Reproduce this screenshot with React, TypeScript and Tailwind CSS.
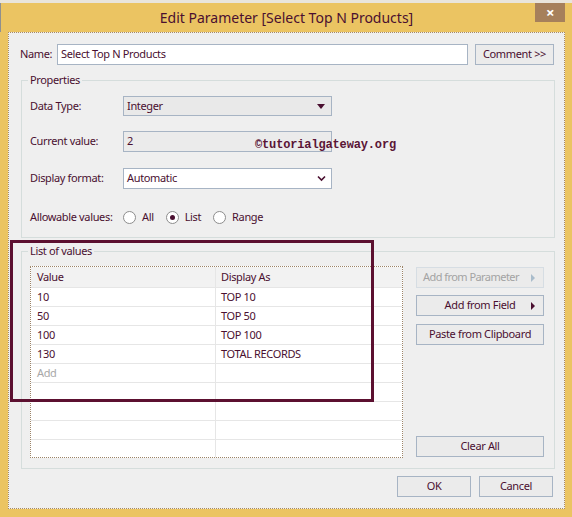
import { ReactNode } from "react";

const ink = "text-[#4a0f30]";

interface BtnProps {
  children: ReactNode;
  className?: string;
  disabled?: boolean;
  arrow?: boolean;
}

function Btn({ children, className = "", disabled = false, arrow = false }: BtnProps) {
  return (
    <div
      className={`relative flex h-[21px] items-center border bg-[#ebebeb] ${
        disabled ? "justify-start border-[#d6dde3] pl-[6px] tracking-[-0.55px] text-[#a3a3a3]" : `justify-center border-[#a7b4c4] ${ink}`
      } ${className}`}
    >
      <span>{children}</span>
      {arrow && (
        <span
          className={`absolute right-[8px] top-[6px] h-0 w-0 border-y-[4px] border-l-[4px] border-y-transparent ${
            disabled ? "border-l-[#a9bccb]" : "border-l-[#4a0f30]"
          }`}
        />
      )}
    </div>
  );
}

function Radio({ label, checked = false }: { label: string; checked?: boolean }) {
  return (
    <div className="flex items-center gap-[6px]">
      <span className="flex h-[13px] w-[13px] items-center justify-center rounded-full border border-[#8d8d8d] bg-white">
        {checked && <span className="h-[5px] w-[5px] rounded-full bg-[#4a0f30]" />}
      </span>
      <span>{label}</span>
    </div>
  );
}

const rows = [
  { value: "10", display: "TOP 10" },
  { value: "50", display: "TOP 50" },
  { value: "100", display: "TOP 100" },
  { value: "130", display: "TOTAL RECORDS" },
];

export default function App() {
  return (
    <div
      className={`relative flex h-[517px] w-[572px] flex-col overflow-hidden border-t-[3px] border-[#e9e5dc] bg-[#ebc462] text-[11px] tracking-[-0.35px] ${ink}`}
      style={{ fontFamily: '"Noto Sans", "Open Sans", sans-serif' }}
    >
      {/* title bar */}
      <div className="relative flex h-[29px] shrink-0 items-center justify-center border-l border-[#8f8f8f]">
        <span className="text-[14px] leading-none tracking-[0px] text-[#4a0f30]">Edit Parameter [Select Top N Products]</span>
        <div className="absolute right-[7px] top-0 flex h-[19px] w-[30px] items-center justify-center bg-[#a6805b] text-[15px] font-bold leading-none text-white">
          ×
        </div>
      </div>

      {/* client area */}
      <div className="mx-[8px] mb-[8px] mr-[7px] flex flex-1 flex-col border border-dotted border-[#a88a62] bg-[#efefef]">
        {/* name row */}
        <div className="mt-[11px] flex h-[21px] items-center">
          <span className="ml-[11px] w-[37px]">Name:</span>
          <div className="flex h-[21px] w-[411px] items-center border border-[#a7b4c4] bg-white px-[3px]">
            Select Top N Products
          </div>
          <Btn className="ml-[7px] w-[79px]">Comment &gt;&gt;</Btn>
        </div>

        {/* properties */}
        <fieldset className="ml-[12px] mt-[8px] h-[165px] w-[534px] border border-[#d5dddc] px-[8px]">
          <legend className="ml-[-2px] px-[2px] leading-[14px]">Properties</legend>
          <div className="mt-[9px] flex h-[20px] items-center">
            <span className="w-[93px]">Data Type:</span>
            <div className="relative flex h-[20px] w-[209px] items-center border border-[#a7b4c4] bg-[#e9e9e9] px-[3px]">
              Integer
              <span className="absolute right-[6px] top-[7px] h-0 w-0 border-x-[4px] border-t-[5px] border-x-transparent border-t-[#4a0f30]" />
            </div>
          </div>
          <div className="mt-[15px] flex h-[21px] items-center">
            <span className="w-[93px]">Current value:</span>
            <div className="flex h-[21px] w-[209px] items-center border border-[#a7b4c4] bg-[#ebebeb] px-[3px]">2</div>
          </div>
          <div className="mt-[16px] flex h-[21px] items-center">
            <span className="w-[93px]">Display format:</span>
            <div className="relative flex h-[21px] w-[209px] items-center border border-[#a7b4c4] bg-white px-[3px]">
              Automatic
              <svg className="absolute right-[5px] top-[6px]" width="9" height="7" viewBox="0 0 9 7">
                <path d="M1 1.5 L4.5 5 L8 1.5" fill="none" stroke="#4a0f30" strokeWidth="1.6" />
              </svg>
            </div>
          </div>
          <div className="mt-[20px] flex items-center">
            <span className="w-[93px] whitespace-nowrap">Allowable values:</span>
            <div className="flex items-center gap-[12px]">
              <Radio label="All" />
              <Radio label="List" checked />
              <Radio label="Range" />
            </div>
          </div>
        </fieldset>

        {/* list of values */}
        <fieldset className="ml-[12px] mt-[6px] h-[225px] w-[534px] border border-[#d5dddc] px-[8px]">
          <legend className="ml-[-2px] px-[2px] leading-[14px]">List of values</legend>
          <div className="mt-[8px] flex">
            <div className="h-[192px] w-[373px] overflow-hidden border border-dotted border-[#9c8468] bg-white">
              <div className="flex h-[21px] items-center border-b border-[#e6e6e6] bg-[#f2f2f2]">
                <span className="w-[185px] border-r border-[#e6e6e6] pl-[6px] leading-[20px]">Value</span>
                <span className="pl-[5px]">Display As</span>
              </div>
              {rows.map((r) => (
                <div key={r.value} className="flex h-[19px] items-center border-b border-[#e6e6e6]">
                  <span className="w-[185px] border-r border-[#e6e6e6] pl-[6px] leading-[18px]">{r.value}</span>
                  <span className="pl-[5px]">{r.display}</span>
                </div>
              ))}
              <div className="flex h-[19px] items-center border-b border-[#e6e6e6]">
                <span className="w-[185px] border-r border-[#e6e6e6] pl-[6px] leading-[18px] text-[#a8a8a8]">Add</span>
              </div>
              {[0, 1, 2, 3].map((i) => (
                <div key={i} className="flex h-[19px] border-b border-[#e6e6e6]">
                  <span className="w-[185px] border-r border-[#e6e6e6]" />
                </div>
              ))}
            </div>
            <div className="ml-[13px] flex h-[192px] w-[128px] flex-col pt-[1px]">
              <Btn disabled arrow>Add from Parameter</Btn>
              <Btn arrow className="mt-[7px]">Add from Field</Btn>
              <Btn className="mt-[8px]">Paste from Clipboard</Btn>
              <Btn className="mt-auto mb-[1px]">Clear All</Btn>
            </div>
          </div>
        </fieldset>

        {/* bottom buttons */}
        <div className="mt-[7px] flex justify-end gap-[8px] pr-[11px]">
          <Btn className="w-[74px]">OK</Btn>
          <Btn className="w-[74px]">Cancel</Btn>
        </div>
      </div>

      {/* watermark */}
      <span
        className="absolute left-[255px] top-[133px] text-[12px] font-bold tracking-[-0.15px] text-[#5a1536]"
        style={{ fontFamily: '"Liberation Mono", monospace' }}
      >
        ©tutorialgateway.org
      </span>

      {/* highlight annotation */}
      <div className="pointer-events-none absolute left-[10px] top-[237px] h-[162px] w-[364px] border-[3px] border-[#5c1030]" />
    </div>
  );
}
